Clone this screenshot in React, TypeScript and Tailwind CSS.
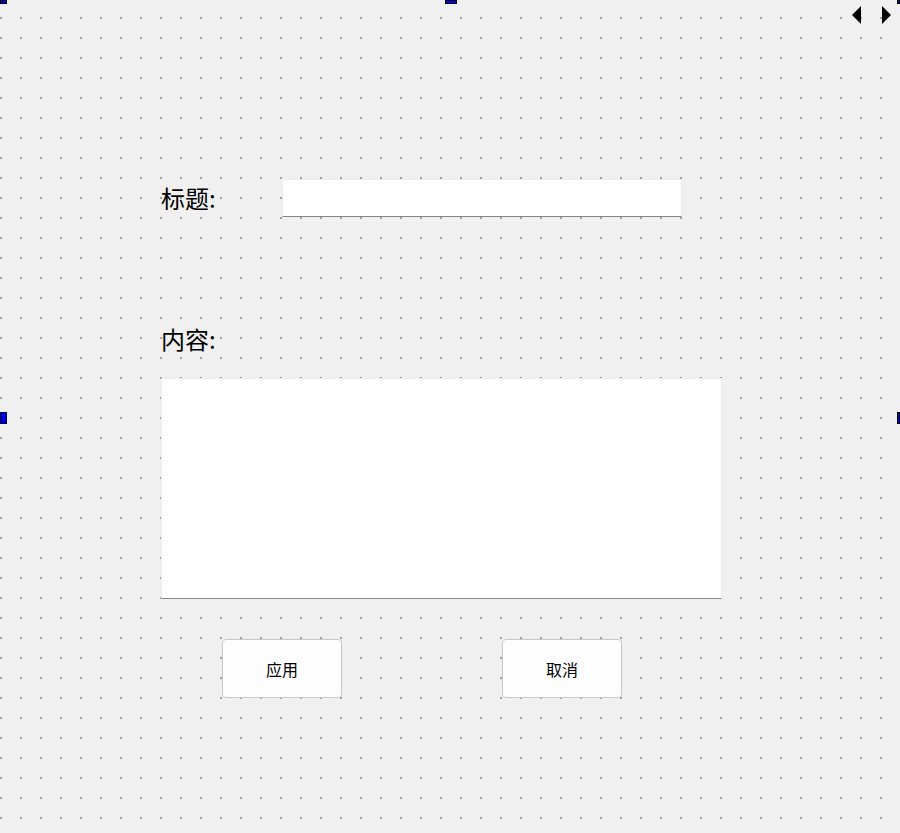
export default function App() {
  return (
    <div
      className="relative w-[900px] h-[833px] overflow-hidden bg-[#f0f0f0]"
      style={{ fontFamily: '"Noto Sans CJK SC", "Noto Sans", sans-serif' }}
    >
      {/* designer dot grid */}
      <svg className="absolute inset-0" width="900" height="833" shapeRendering="crispEdges">
        <defs>
          <pattern id="dots" x="0" y="17" width="20" height="20" patternUnits="userSpaceOnUse">
            <rect x="0" y="0" width="2" height="2" fill="#a0a0a0" />
          </pattern>
        </defs>
        <rect width="900" height="833" fill="url(#dots)" />
      </svg>

      {/* selection handles */}
      <div className="absolute left-0 top-0 w-[7px] h-[4px] border border-black bg-[#0000ff]" />
      <div className="absolute left-[445px] top-0 w-[12px] h-[4px] border border-black bg-[#0000ff]" />
      <div className="absolute right-0 top-0 w-[3px] h-[4px] border border-black bg-[#0000ff]" />
      <div className="absolute left-0 top-[412px] w-[7px] h-[12px] border-2 border-[#000080] bg-[#0000ff]" />
      <div className="absolute right-0 top-[412px] w-[3px] h-[12px] border border-black bg-[#0000ff]" />

      {/* page arrows */}
      <div className="absolute top-[6px] left-[852px] flex gap-[21px]">
        <svg width="9" height="18" viewBox="0 0 9 18">
          <path d="M9 0 L0 9 L9 18 Z" fill="#000" />
        </svg>
        <svg width="9" height="18" viewBox="0 0 9 18">
          <path d="M0 0 L9 9 L0 18 Z" fill="#000" />
        </svg>
      </div>

      <div className="relative flex flex-col pl-[161px] text-black">
        {/* 标题 */}
        <div className="flex items-center mt-[179px] h-[38px]">
          <span className="w-[121px] text-[24px] leading-[28px]">标题:</span>
          <div className="w-[400px] h-[38px] bg-white border border-[#ececec] border-b-[#868686]" />
        </div>

        {/* 内容 */}
        <div className="mt-[108px] text-[24px] leading-[28px]">内容:</div>
        <div className="mt-[25px] w-[561px] h-[221px] bg-white border border-[#ececec] border-b-[#868686]" />

        {/* buttons */}
        <div className="flex mt-[40px] pl-[61px] gap-[160px]">
          <button className="w-[120px] h-[59px] rounded-[4px] border border-[#c8c8c8] bg-[#fdfdfd] text-[16px]">
            应用
          </button>
          <button className="w-[120px] h-[59px] rounded-[4px] border border-[#c8c8c8] bg-[#fdfdfd] text-[16px]">
            取消
          </button>
        </div>
      </div>
    </div>
  );
}
